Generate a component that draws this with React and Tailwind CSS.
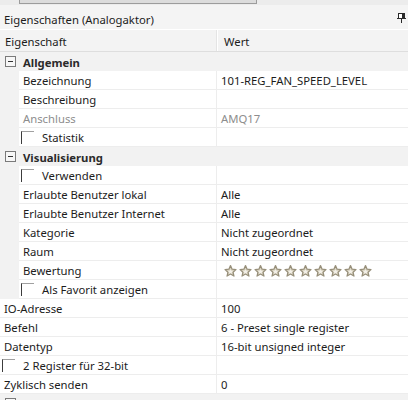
import React from "react";

const FONT = { fontFamily: '"Noto Sans", "Open Sans", sans-serif' };

function Checkbox() {
  return <span className="inline-block w-[13px] h-[13px] border-t border-l border-t-[#a0a0a0] border-l-[#3c3c3c] bg-white shrink-0" />;
}

function Star() {
  return (
    <svg width="13" height="12" viewBox="0 0 24 23" className="shrink-0">
      <path
        d="M12 1.2l3.1 6.9 7.4.7-5.6 5 1.7 7.4L12 17.3l-6.6 3.9 1.7-7.4-5.6-5 7.4-.7z"
        fill="#d9d3c1"
        stroke="#978f7a"
        strokeWidth="2.4"
        strokeLinejoin="round"
      />
      <path d="M12 8l1.5 3.2 3.3.3-2.5 2.2.8 3.3L12 15.3l-3.1 1.7.8-3.3-2.5-2.2 3.3-.3z" fill="#f3f0e8" />
    </svg>
  );
}

function ExpandBox() {
  return (
    <span className="w-[11px] h-[11px] border border-[#7a7a7a] bg-[#f7f7f7] flex items-center justify-center shrink-0">
      <span className="block w-[5px] h-px bg-[#333]" />
    </span>
  );
}

function Category({ label }) {
  return (
    <div className="flex items-center h-[19px] bg-[#f2f2f2]">
      <span className="w-[23px] pl-[5px] flex items-center">
        <ExpandBox />
      </span>
      <span className="font-bold text-[#2a2a2a] pt-[2px]">{label}</span>
    </div>
  );
}

function Row({ label, value, indent, checkbox, muted, stars }) {
  const text = muted ? "text-[#8d8d8d]" : "text-[#1c1c1c]";
  return (
    <div className="flex h-[19px]">
      {indent && <div className="w-[19px] bg-[#f2f2f2] shrink-0" />}
      <div
        className={`flex items-center border-b border-r border-[#ededed] bg-white ${
          indent ? "w-[198px]" : "w-[217px]"
        } ${checkbox ? "pl-[2px] gap-[8px]" : "pl-[4px]"} ${text}`}
      >
        {checkbox && <Checkbox />}
        <span className="whitespace-nowrap pt-[2px]">{label}</span>
      </div>
      <div className={`flex-1 flex items-center pl-[4px] border-b border-[#ededed] bg-white ${text}`}>
        {stars ? (
          <div className="flex gap-[2px] pl-[3px] pt-px">
            {Array.from({ length: 10 }).map((_, i) => (
              <Star key={i} />
            ))}
          </div>
        ) : (
          <span className="whitespace-nowrap pt-[2px]">{value}</span>
        )}
      </div>
    </div>
  );
}

export default function App() {
  return (
    <div className="w-[408px] h-[400px] overflow-hidden bg-[#f2f2f2] text-[11.3px] leading-none" style={FONT}>
      {/* horizontal scroller remnant */}
      <div className="h-[5px] bg-[#ececec] relative">
        <div className="absolute left-[19px] top-0 w-[238px] h-[4px] bg-[#dcdcdc] border border-t-0 border-[#9c9c9c]" />
      </div>
      {/* panel title */}
      <div className="h-[25px] flex items-center justify-between pl-[4px] pr-[2px] pt-[5px] bg-[#f4f4f4] border-b border-white text-[#1c1c1c]">
        <span>Eigenschaften (Analogaktor)</span>
        <svg width="9" height="10" viewBox="0 0 9 10" className="-mt-[4px]">
          <rect x="1.5" y="0.5" width="6" height="5" fill="#ffffff" stroke="#2a2a2a" />
          <rect x="5" y="1" width="2" height="4" fill="#2a2a2a" />
          <rect x="0" y="5" width="9" height="1" fill="#2a2a2a" />
          <rect x="4" y="6" width="1" height="4" fill="#2a2a2a" />
        </svg>
      </div>
      {/* column header */}
      <div className="flex h-[22px] bg-[#f3f3f3] border-b border-[#dedede] text-[#1c1c1c]">
        <div className="w-[217px] flex items-center pl-[5px] pt-[2px] border-r border-[#e4e4e4]">Eigenschaft</div>
        <div className="flex-1 flex items-center pl-[6px] pt-[2px] border-l border-white">Wert</div>
      </div>

      <Category label="Allgemein" />
      <Row indent label="Bezeichnung" value="101-REG_FAN_SPEED_LEVEL" />
      <Row indent label="Beschreibung" value="" />
      <Row indent muted label="Anschluss" value="AMQ17" />
      <Row indent checkbox label="Statistik" value="" />

      <Category label="Visualisierung" />
      <Row indent checkbox label="Verwenden" value="" />
      <Row indent label="Erlaubte Benutzer lokal" value="Alle" />
      <Row indent label="Erlaubte Benutzer Internet" value="Alle" />
      <Row indent label="Kategorie" value="Nicht zugeordnet" />
      <Row indent label="Raum" value="Nicht zugeordnet" />
      <Row indent stars label="Bewertung" />
      <Row indent checkbox label="Als Favorit anzeigen" value="" />

      <Row label="IO-Adresse" value="100" />
      <Row label="Befehl" value="6 - Preset single register" />
      <Row label="Datentyp" value="16-bit unsigned integer" />
      <Row checkbox label="2 Register für 32-bit" value="" />
      <Row label="Zyklisch senden" value="0" />

      <Category label="Kurvenlogik" />
    </div>
  );
}
